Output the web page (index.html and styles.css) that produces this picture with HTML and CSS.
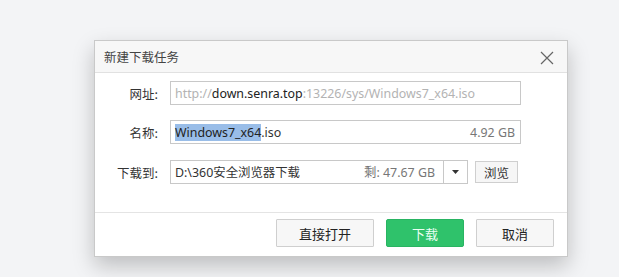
FILE: index.html
```html
<!DOCTYPE html>
<html lang="zh-CN">
<head>
<meta charset="utf-8">
<link rel="stylesheet" href="styles.css">
</head>
<body>
<div class="dialog">
  <div class="titlebar">
    <span class="title">新建下载任务</span>
    <svg class="close" width="14" height="14" viewBox="0 0 14 14"><path d="M1 1L13 13M13 1L1 13" stroke="#666" stroke-width="1.2" fill="none"/></svg>
  </div>
  <div class="content">
    <div class="row">
      <label class="label">网址:</label>
      <div class="field url"><span class="dim">http://</span><span class="dark">down.senra.top</span><span class="dim">:13226/sys/Windows7_x64.iso</span></div>
    </div>
    <div class="row">
      <label class="label">名称:</label>
      <div class="field name"><span><span class="sel">Windows7_x64</span>.iso</span><span class="size">4.92 GB</span></div>
    </div>
    <div class="row row3">
      <label class="label">下载到:</label>
      <div class="field path"><span>D:\360安全浏览器下载</span><span class="free">剩: 47.67 GB</span></div>
      <div class="drop"><svg width="7" height="4" viewBox="0 0 7 4"><path d="M0 0H7L3.5 4Z" fill="#333"/></svg></div>
      <button class="browse">浏览</button>
    </div>
  </div>
  <div class="footer">
    <button class="btn open">直接打开</button>
    <button class="btn primary">下载</button>
    <button class="btn">取消</button>
  </div>
</div>
</body>
</html>
```
FILE: styles.css
```css
html, body { margin: 0; padding: 0; }
body {
  background: #f3f4f6;
  width: 619px;
  height: 277px;
  overflow: hidden;
  padding: 40px 0 0 94px;
  box-sizing: border-box;
  font-family: "Noto Sans", "Noto Sans CJK SC", sans-serif;
  font-size: 12px;
  color: #333;
}
.dialog {
  width: 474px;
  height: 217px;
  box-sizing: border-box;
  border: 1px solid #c9c9c9;
  background: #fff;
  box-shadow: 0 9px 20px rgba(0,0,0,0.22);
  display: flex;
  flex-direction: column;
}
.titlebar {
  height: 31px;
  background: #f7f7f7;
  border-bottom: 1px solid #e1e1e1;
  display: flex;
  align-items: center;
  justify-content: space-between;
  padding: 0 13px 0 9px;
  flex-shrink: 0;
}
.title { font-size: 12.5px; color: #444; font-family: "Noto Sans CJK SC", sans-serif; }
.close { display: block; margin-top: 3px; }
.content {
  padding: 8px 46px 0 0;
  display: flex;
  flex-direction: column;
  gap: 15px;
  flex: 1;
}
.row { display: flex; align-items: center; height: 24px; }
.row3 { margin-top: 1px; }
.label {
  width: 63px;
  text-align: right;
  margin-right: 12px;
  font-family: "Noto Sans CJK SC", sans-serif;
  font-size: 12.5px;
  color: #333;
}
.field {
  flex: 1;
  height: 24px;
  box-sizing: border-box;
  border: 1px solid #c8c8c8;
  display: flex;
  align-items: center;
  padding: 0 5px 0 4px;
  font-size: 12.4px;
  white-space: nowrap;
  overflow: hidden;
  justify-content: space-between;
}
.url { justify-content: flex-start; }
.dim { color: #b3b3b3; }
.dark { color: #222; }
.sel { background: #99bde8; color: #222; }
.size, .free { color: #777; }
.path { flex: 0 0 274px; padding-right: 8px; }
.path span:first-child { color: #333; }
.drop {
  width: 24px;
  height: 24px;
  box-sizing: border-box;
  border: 1px solid #c8c8c8;
  border-left: none;
  display: flex;
  align-items: center;
  justify-content: center;
}
.browse {
  margin-left: 7px;
  width: 43px;
  height: 22px;
  border: 1px solid #cfcfcf;
  background: #f6f6f6;
  font-family: "Noto Sans CJK SC", sans-serif;
  font-size: 12.5px;
  color: #333;
  padding: 0;
}
.footer {
  height: 44px;
  border-top: 1px solid #e4e4e4;
  display: flex;
  justify-content: flex-end;
  align-items: flex-start;
  padding: 6px 13px 0 0;
  gap: 12px;
  box-sizing: border-box;
  flex-shrink: 0;
}
.btn {
  width: 78px;
  height: 28px;
  border: 1px solid #cfcfcf;
  background: #f7f7f7;
  font-family: "Noto Sans CJK SC", sans-serif;
  font-size: 13px;
  color: #222;
  padding: 0;
  border-radius: 1px;
}
.btn.open { width: 98px; }
.btn.primary {
  background: #2fc26b;
  border-color: #29b462;
  color: #eafff1;
  border-radius: 2px;
}
```
